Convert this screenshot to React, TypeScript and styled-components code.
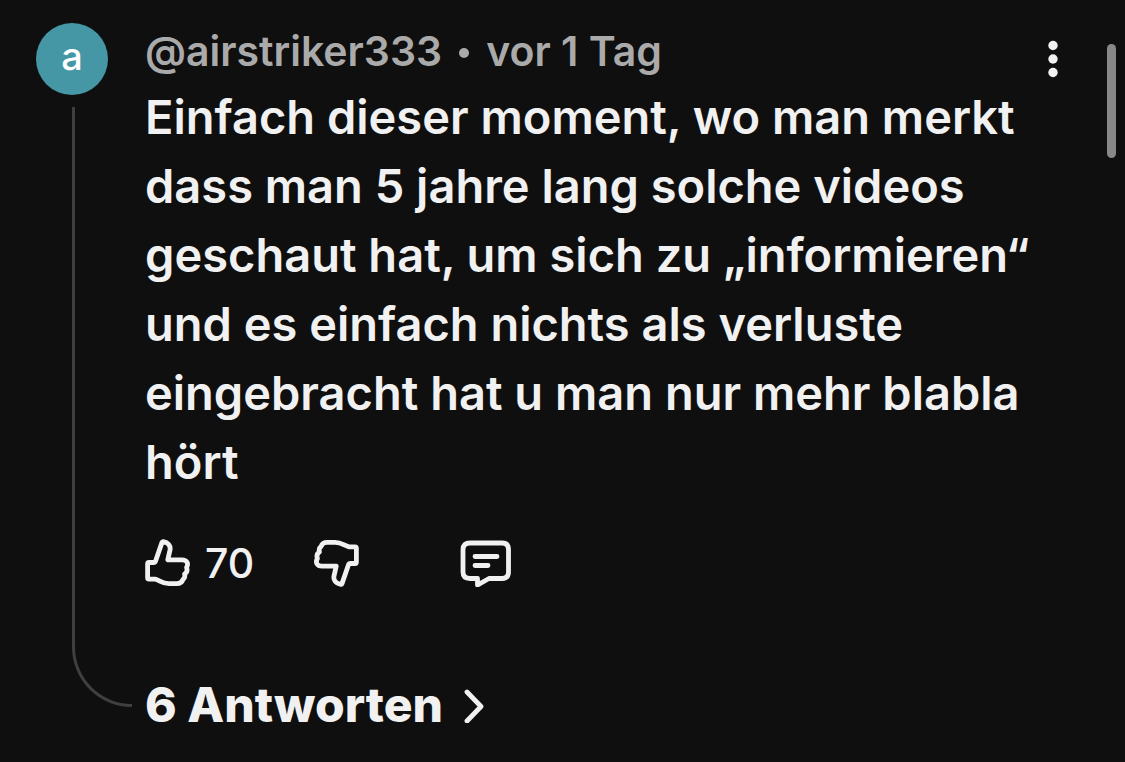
import React from "react";
import styled, { createGlobalStyle } from "styled-components";

const GlobalStyle = createGlobalStyle`
  * { box-sizing: border-box; }
  body {
    margin: 0;
    background: #0f0f0f;
    color: #f1f1f1;
    font-family: Inter, "Liberation Sans", sans-serif;
  }
`;

const Comment = styled.article`
  display: flex;
  min-height: 100vh;
  padding: 23px 54px 24px 36px;
`;

const Rail = styled.div`
  flex: none;
  display: flex;
  flex-direction: column;
  width: 109px;
`;

const Avatar = styled.div`
  display: flex;
  align-items: center;
  justify-content: center;
  width: 72px;
  height: 72px;
  margin-bottom: 12px;
  padding-bottom: 6px;
  border-radius: 50%;
  background: #4597a5;
  color: #fff;
  font-size: 38px;
  font-weight: 500;
  line-height: 48px;
`;

const Thread = styled.div`
  flex: 1;
  width: 60px;
  margin: 0 0 31px 36px;
  border: solid #3f3f3f;
  border-width: 0 0 3px 3px;
  border-bottom-left-radius: 60px;
`;

const Content = styled.div`
  flex: 1;
  min-width: 0;
`;

const Meta = styled.header`
  display: flex;
  align-items: center;
  gap: 17px;
  color: #aaa;
  font-size: 41px;
  font-weight: 600;
  line-height: 56px;
`;

const Dot = styled.span`
  width: 10px;
  height: 10px;
  margin-top: 4px;
  border-radius: 50%;
  background: currentColor;
`;

const Author = styled.a`
  color: inherit;
  text-decoration: none;
`;

const Message = styled.p`
  margin: 3px 0 0;
  font-size: 47px;
  font-weight: 600;
  line-height: 69px;
`;

const Actions = styled.div`
  display: flex;
  align-items: center;
  height: 60px;
  margin-top: 37px;
`;

const IconButton = styled.button<{ $gap?: number }>`
  display: flex;
  align-items: center;
  gap: 14px;
  margin: 0 ${(p) => p.$gap ?? 0}px 0 0;
  padding: 0;
  border: 0;
  background: none;
  color: inherit;
  font: 500 41px/60px Inter, "Liberation Sans", sans-serif;
`;

const Replies = styled.button`
  display: flex;
  align-items: center;
  gap: 20px;
  margin: 80px 0 0;
  padding: 0;
  border: 0;
  background: none;
  color: inherit;
  font: 800 48px/64px Inter, "Liberation Sans", sans-serif;
`;

const MenuButton = styled.button`
  flex: none;
  align-self: flex-start;
  width: 20px;
  height: 40px;
  margin-top: 16px;
  margin-right: 8px;
  padding: 0;
  border: 0;
  background: none;
  color: inherit;
`;

const ScrollThumb = styled.div`
  position: absolute;
  top: 44px;
  right: 9px;
  width: 9px;
  height: 114px;
  border-radius: 5px;
  background: #888;
`;

const Icon = styled.svg`
  display: block;
  flex: none;
  fill: none;
  stroke: currentColor;
  stroke-width: 4.8;
  stroke-linecap: round;
  stroke-linejoin: round;
`;

const THUMB =
  "M4 23.5 H8.5 Q10 23.5 10.6 22 L17 3.4 Q17.3 2.4 18.4 2.6 C23 3.4 25.8 6.5 25 11 L22.8 20.8 H37 C42 20.8 43.8 24.5 41.6 28.5 C42.6 31.5 41.6 33.8 39.6 35 C40.2 37.5 39.4 39.5 38 40.5 C37 43.5 35 44.6 32 44.6 H24 C17 44.6 14.5 41 10 40.2 H4 Q2.6 40.2 2.6 38.8 V25 Q2.6 23.5 4 23.5 Z";

export default function App() {
  return (
    <>
      <GlobalStyle />
      <Comment>
        <Rail>
          <Avatar>a</Avatar>
          <Thread />
        </Rail>
        <Content>
          <Meta>
            <Author href="#author">@airstriker333</Author>
            <Dot />
            <time>vor 1 Tag</time>
          </Meta>
          <Message>
            Einfach dieser moment, wo man merkt dass man 5 jahre lang solche
            videos geschaut hat, um sich zu „informieren“ und es einfach nichts
            als verluste eingebracht hat u man nur mehr blabla hört
          </Message>
          <Actions>
            <IconButton $gap={60} aria-label="Mag ich, 70">
              <Icon width="46" height="48" viewBox="0 0 46 48">
                <path d={THUMB} />
              </Icon>
              70
            </IconButton>
            <IconButton $gap={100} aria-label="Mag ich nicht">
              <Icon width="46" height="48" viewBox="0 0 46 48">
                <path d={THUMB} transform="rotate(180 22.5 24)" />
              </Icon>
            </IconButton>
            <IconButton aria-label="Antworten">
              <Icon width="52" height="48" viewBox="0 0 52 48">
                <path d="M10 4 H42 Q48.5 4 48.5 10.5 V33 Q48.5 39.5 42 39.5 H29 L17.5 46 V39.5 H10 Q3 39.5 3 33 V10.5 Q3 4 10 4 Z" />
                <path d="M15 17.5 H37 M15 26.5 H28" />
              </Icon>
            </IconButton>
          </Actions>
          <Replies>
            6 Antworten
            <Icon width="22" height="36" viewBox="0 0 22 36">
              <path d="M4 5 L18 19.5 L4 34" />
            </Icon>
          </Replies>
        </Content>
        <MenuButton aria-label="Weitere Aktionen">
          <svg width="20" height="40" viewBox="0 0 20 40" fill="currentColor">
            <circle cx="10" cy="6.5" r="4.7" />
            <circle cx="10" cy="20" r="4.7" />
            <circle cx="10" cy="33.5" r="4.7" />
          </svg>
        </MenuButton>
      </Comment>
      <ScrollThumb />
    </>
  );
}
